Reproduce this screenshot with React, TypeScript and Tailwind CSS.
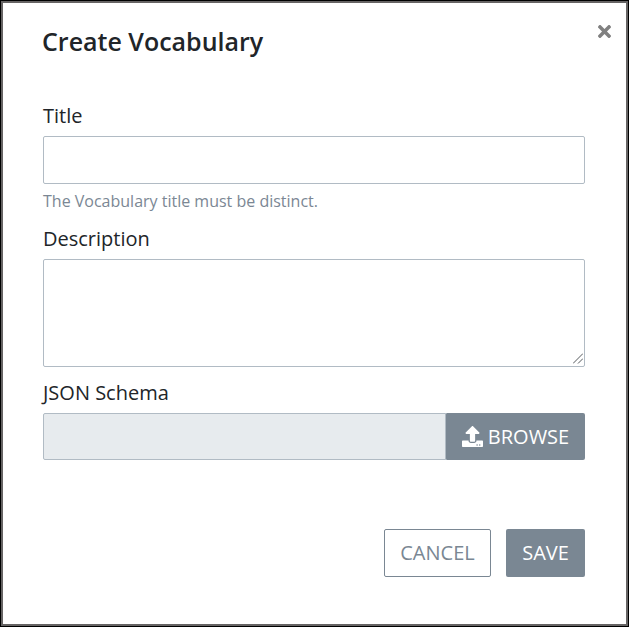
import { FaTimes, FaUpload } from "react-icons/fa";

export default function App() {
  return (
    <div className="h-[627px] w-[629px] border border-black bg-white font-['Open_Sans',sans-serif] text-[#212529]">
      <div className="flex h-full flex-col border-2 border-[#666464] pr-[41px] pl-10">
        <header className="flex h-[96px] shrink-0 justify-between">
          <h1 className="-ml-px mt-[21px] text-[25px] leading-[34px] font-semibold">Create Vocabulary</h1>
          <button aria-label="Close" className="mt-[19px] -mr-[29px] h-[19px] text-[#808080]"><FaTimes size={19} /></button>
        </header>
        <form className="flex flex-col text-xl font-normal">
          <label htmlFor="title" className="h-[37px] leading-[34px]">Title</label>
          <input id="title" className="h-12 rounded-[2px] border border-[#b1bbc4] px-3" />
          <p className="h-[39px] pt-[5px] text-base leading-6 text-[#7b8794]">The Vocabulary title must be distinct.</p>
          <label htmlFor="description" className="h-9 leading-[32px]">Description</label>
          <div className="relative flex h-[108px]">
            <textarea id="description" className="w-full resize-none rounded-[2px] border border-[#b1bbc4] px-3" />
            <svg className="pointer-events-none absolute right-[2px] bottom-[3px]" width="10" height="11" viewBox="0 0 10 11" fill="none" stroke="#55585c" strokeWidth="1">
              <path d="M0 10.5 10 .5M5 10.5l5-5" />
            </svg>
          </div>
          <label htmlFor="schema" className="h-[46px] pt-2 leading-[36px]">JSON Schema</label>
          <div className="flex h-[47px]">
            <input id="schema" readOnly className="min-w-0 flex-1 rounded-l-[2px] border border-[#b1bbc4] bg-[#e7ebee] px-3" />
            <button type="button" className="-ml-px flex w-[140px] items-center justify-center gap-[5px] rounded-[2px] border-l border-[#b1bbc4] bg-[#7a8793] text-white">
              <FaUpload size={21} />
              <span>BROWSE</span>
            </button>
          </div>
          <footer className="mt-[69px] flex h-12 justify-end gap-[15px]">
            <button type="button" className="w-[107px] rounded-[2px] border border-[#7a8793] text-[#7a8793]">CANCEL</button>
            <button type="button" className="w-[79px] rounded-[2px] bg-[#7a8793] text-white">SAVE</button>
          </footer>
        </form>
      </div>
    </div>
  );
}
